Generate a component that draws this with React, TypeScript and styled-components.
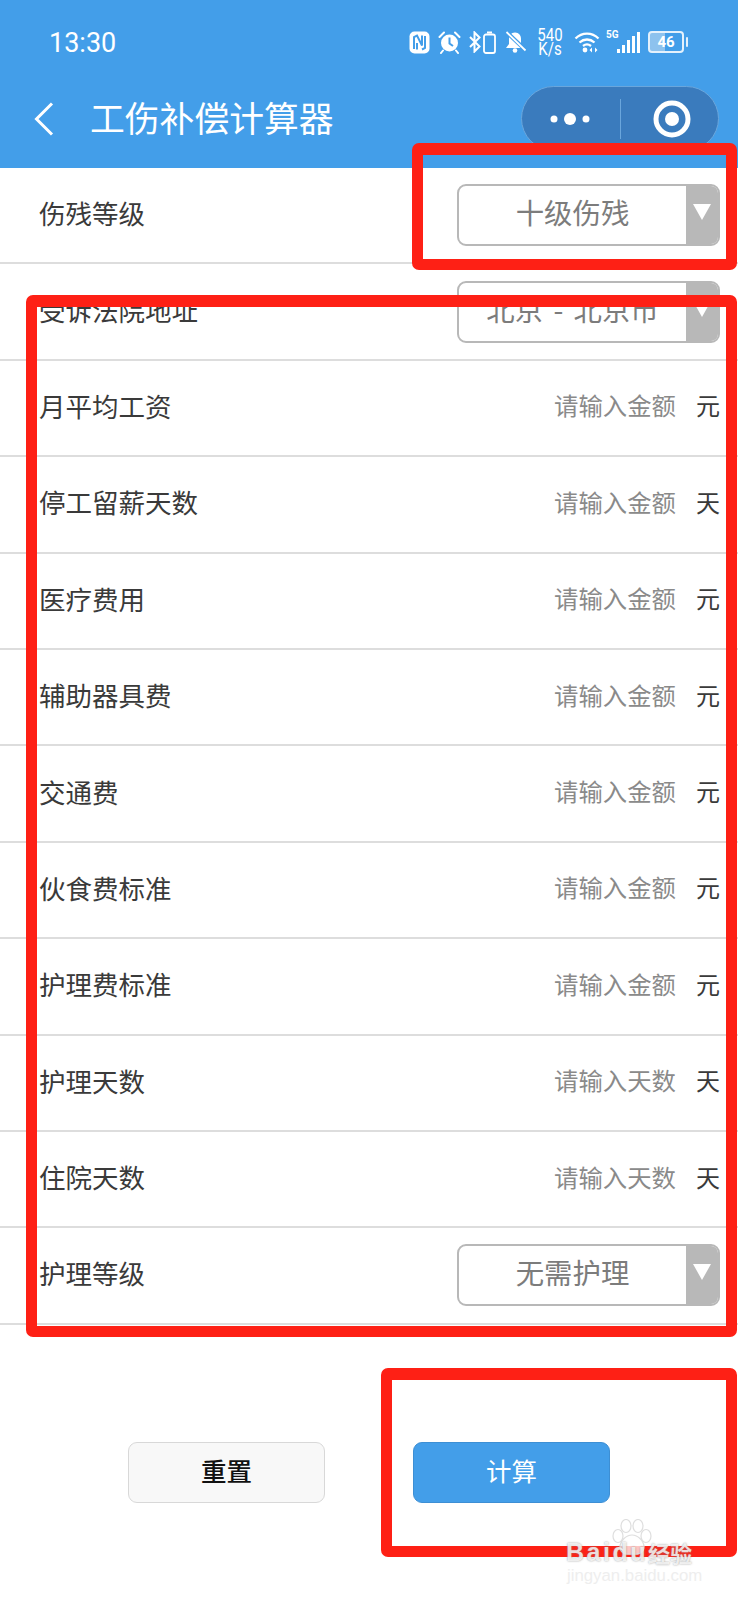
import React from "react";
import styled, { createGlobalStyle } from "styled-components";

const BLUE = "#439ee9";
const RED = "#fe2015";

const GlobalStyle = createGlobalStyle`
  html, body {
    margin: 0;
    padding: 0;
    background: #fff;
  }
  body {
    font-family: "Noto Sans CJK SC", "Noto Sans", sans-serif;
    color: #333;
  }
`;

const Page = styled.div`
  position: relative;
  width: 738px;
  height: 1600px;
  overflow: hidden;
  background: #fff;
`;

const Header = styled.header`
  height: 168px;
  box-sizing: border-box;
  background: ${BLUE};
  color: #fff;
`;

const StatusBar = styled.div`
  height: 80px;
  box-sizing: border-box;
  padding: 22px 50px 0 49px;
  display: flex;
  justify-content: space-between;
  align-items: flex-start;
`;

const Time = styled.span`
  font-family: "Roboto", "Liberation Sans", sans-serif;
  font-size: 27px;
  line-height: 42px;
`;

const StatusIcons = styled.div`
  display: flex;
  align-items: center;
  height: 40px;
`;

const StatusIcon = styled.svg<{ $gap?: number }>`
  flex: none;
  margin-left: ${(p) => p.$gap ?? 0}px;
`;

const Speed = styled.div`
  font-family: "Roboto", "Liberation Sans", sans-serif;
  font-size: 15px;
  line-height: 12px;
  text-align: center;
  width: 28px;
  margin: 0 10px 0 9px;
  transform: scaleY(1.2);
`;

const FiveG = styled.span`
  font-family: "Roboto", "Liberation Sans", sans-serif;
  font-size: 10px;
  font-weight: 700;
  width: 11px;
  margin: -16px 0 0 6px;
`;

const BatteryBox = styled.div`
  width: 36px;
  height: 22px;
  box-sizing: border-box;
  margin-left: 8px;
  border: 2px solid #e4f1fc;
  border-radius: 4px;
  background: linear-gradient(90deg, #8dc2ee 46%, transparent 46%);
  font-family: "Roboto", "Liberation Sans", sans-serif;
  font-size: 15px;
  font-weight: 700;
  line-height: 18px;
  text-align: center;
`;

const BatteryTip = styled.div`
  width: 2px;
  height: 10px;
  margin-left: 2px;
  border-radius: 1px;
  background: #e4f1fc;
`;

const NavBar = styled.div`
  height: 88px;
  box-sizing: border-box;
  padding: 6px 19px 0 34px;
  display: flex;
  align-items: flex-start;
`;

const BackIcon = styled.svg`
  width: 20px;
  height: 34px;
  margin-top: 16px;
  flex: none;
`;

const Title = styled.h1`
  margin: 0 0 0 36px;
  flex: 1;
  font-size: 34.8px;
  font-weight: 400;
  line-height: 62px;
  white-space: nowrap;
`;

const Capsule = styled.div`
  width: 198px;
  height: 65px;
  box-sizing: border-box;
  border: 1px solid #6aa6dc;
  border-radius: 33px;
  background: #3a7bbd;
  display: flex;
  align-items: center;
  justify-content: center;
`;

const CapsuleDivider = styled.div`
  width: 1px;
  height: 40px;
  background: #6aa6dc;
`;

const CapsuleSide = styled.div`
  flex: 1;
  display: flex;
  align-items: center;
  justify-content: center;
`;

const TargetIcon = styled.svg`
  width: 38px;
  height: 38px;
  margin-left: 5px;
`;

const Row = styled.div`
  height: 96.4px;
  box-sizing: border-box;
  padding: 0 18px 0 39px;
  border-bottom: 2px solid #dddddd;
  display: flex;
  align-items: center;
  justify-content: space-between;
`;

const Label = styled.span`
  font-size: 26.5px;
  color: #3a3a3a;
  margin-bottom: 5px;
`;

const InputGroup = styled.div`
  display: flex;
  align-items: center;
  margin-bottom: 6px;
`;

const Placeholder = styled.span`
  font-size: 24.4px;
  color: #8a8a8a;
`;

const Unit = styled.span`
  font-size: 24px;
  color: #3a3a3a;
  margin-left: 20px;
`;

const SelectBox = styled.div`
  width: 263px;
  height: 62px;
  box-sizing: border-box;
  border: 2px solid #b8b8b8;
  border-radius: 9px;
  display: flex;
  overflow: hidden;
`;

const SelectValue = styled.div`
  flex: 1;
  text-align: center;
  font-size: 28.4px;
  line-height: 52px;
  word-spacing: 4px;
  color: #7c7c7c;
  white-space: nowrap;
`;

const SelectArrow = styled.div`
  width: 32px;
  background: #b8b8b8;
  display: flex;
  align-items: center;
  justify-content: center;

  &::after {
    content: "";
    margin-top: -6px;
    border-left: 9px solid transparent;
    border-right: 9px solid transparent;
    border-top: 16px solid #fff;
  }
`;

const ButtonBar = styled.div`
  padding-top: 117px;
  display: flex;
  justify-content: center;
  gap: 88px;
`;

const Button = styled.button<{ $primary?: boolean }>`
  width: 197px;
  height: 61px;
  box-sizing: border-box;
  padding: 0 0 5px;
  border: 1px solid ${(p) => (p.$primary ? "#3d8fd4" : "#d8d8d8")};
  border-radius: 9px;
  background: ${(p) => (p.$primary ? BLUE : "#f8f8f8")};
  color: ${(p) => (p.$primary ? "#fff" : "#111")};
  font-family: inherit;
  font-size: 25.5px;
  font-weight: ${(p) => (p.$primary ? 400 : 500)};
`;

const AnnotationFrame = styled.div<{
  $left: number;
  $top: number;
  $height: number;
}>`
  position: absolute;
  left: ${(p) => p.$left}px;
  right: 1px;
  top: ${(p) => p.$top}px;
  height: ${(p) => p.$height}px;
  box-sizing: border-box;
  border: solid ${RED};
  border-width: 12px 11px 11px 11px;
  border-radius: 7px;
  pointer-events: none;
`;

const Watermark = styled.div`
  position: absolute;
  left: 566px;
  top: 1519px;
  width: 134px;
  height: 68px;
`;

const Paw = styled.svg`
  position: absolute;
  left: 45px;
  top: 0;
  width: 42px;
  height: 38px;
`;

const WatermarkBrand = styled.div`
  position: absolute;
  left: 0;
  top: 18px;
  display: flex;
  align-items: center;
  font-family: "Liberation Sans", sans-serif;
  font-size: 25px;
  font-weight: 700;
  line-height: 30px;
  letter-spacing: 2.5px;
  color: rgba(255, 255, 255, 0.78);
  text-shadow: 0 0 2px rgba(130, 130, 130, 0.8);
  white-space: nowrap;
`;

const WatermarkCn = styled.span`
  font-family: "Noto Sans CJK SC", sans-serif;
  font-size: 22px;
  letter-spacing: 0;
`;

const WatermarkUrl = styled.div`
  position: absolute;
  left: 1px;
  top: 47px;
  font-family: "Liberation Sans", sans-serif;
  font-size: 16.8px;
  line-height: 20px;
  color: #eeeeee;
  white-space: nowrap;
`;

type RowData = {
  label: string;
  select?: string;
  placeholder?: string;
  unit?: string;
};

const rows: RowData[] = [
  { label: "伤残等级", select: "十级伤残" },
  { label: "受诉法院地址", select: "北京 - 北京市" },
  { label: "月平均工资", placeholder: "请输入金额", unit: "元" },
  { label: "停工留薪天数", placeholder: "请输入金额", unit: "天" },
  { label: "医疗费用", placeholder: "请输入金额", unit: "元" },
  { label: "辅助器具费", placeholder: "请输入金额", unit: "元" },
  { label: "交通费", placeholder: "请输入金额", unit: "元" },
  { label: "伙食费标准", placeholder: "请输入金额", unit: "元" },
  { label: "护理费标准", placeholder: "请输入金额", unit: "元" },
  { label: "护理天数", placeholder: "请输入天数", unit: "天" },
  { label: "住院天数", placeholder: "请输入天数", unit: "天" },
  { label: "护理等级", select: "无需护理" },
];

const NfcIcon = () => (
  <StatusIcon width="21" height="23" viewBox="0 0 21 23">
    <rect x="0.5" y="0.5" width="20" height="22" rx="5" fill="#fff" />
    <path d="M5 18V6l3-1.500 5 10V4.500" fill="none" stroke={BLUE} strokeWidth="2" />
    <path d="M8 12v6.500M13 18.500l3-1.500V5" fill="none" stroke={BLUE} strokeWidth="2" />
  </StatusIcon>
);

const AlarmIcon = () => (
  <StatusIcon $gap={8} width="23" height="23" viewBox="0 0 23 23">
    <circle cx="11.500" cy="12" r="8.500" fill="#fff" />
    <path d="M11.500 6.500V12.500L15 15" fill="none" stroke={BLUE} strokeWidth="2" />
    <path
      d="M1.500 6L6 1.500M21.500 6L17 1.500M5 19.500L3 22M18 19.500L20 22"
      stroke="#fff"
      strokeWidth="2"
      strokeLinecap="round"
    />
  </StatusIcon>
);

const BluetoothIcon = () => (
  <StatusIcon $gap={8} width="12" height="22" viewBox="0 0 12 22">
    <path
      d="M1 6L10.500 15.500L5.500 20.500V1.500L10.500 6.500L1 16"
      fill="none"
      stroke="#fff"
      strokeWidth="2"
    />
  </StatusIcon>
);

const SmallBatteryIcon = () => (
  <StatusIcon $gap={2} width="13" height="23" viewBox="0 0 13 23">
    <rect x="1" y="3.500" width="11" height="18.500" rx="2" fill="none" stroke="#fff" strokeWidth="1.800" />
    <rect x="4" y="0.500" width="5" height="2" fill="#fff" />
  </StatusIcon>
);

const MutedBellIcon = () => (
  <StatusIcon $gap={8} width="23" height="24" viewBox="0 0 23 24">
    <path
      d="M11 2.500c-4 0-6 3-6 6.500v5L2 18h18l-3-4V9c0-3.500-2-6.500-6-6.500z"
      fill="#fff"
    />
    <circle cx="11" cy="20.500" r="2.300" fill="#fff" />
    <path d="M3 2.500L21.500 20" stroke={BLUE} strokeWidth="4" />
    <path d="M2.500 2L21.500 20.500" stroke="#fff" strokeWidth="1.800" />
  </StatusIcon>
);

const WifiIcon = () => (
  <StatusIcon width="26" height="22" viewBox="0 0 26 22">
    <path
      d="M1.500 7.500C8 1 18 1 24.500 7.500M5.500 11.500C10 7.500 16 7.500 20.500 11.500M9 15C11.500 13 14.500 13 17 15"
      fill="none"
      stroke="#fff"
      strokeWidth="2.300"
    />
    <circle cx="11" cy="19" r="2.400" fill="#fff" />
    <path d="M18 16.500L15.500 19L18 21.500zM21 16.500L23.500 19L21 21.500z" fill="#fff" />
  </StatusIcon>
);

const SignalIcon = () => (
  <StatusIcon width="23" height="23" viewBox="0 0 23 23">
    <rect x="0" y="18" width="3" height="4" fill="#fff" />
    <rect x="5" y="14" width="3" height="8" fill="#fff" />
    <rect x="10" y="9" width="3" height="13" fill="#fff" />
    <rect x="15" y="5" width="3" height="17" fill="#fff" />
    <rect x="20" y="1" width="3" height="21" fill="#fff" />
  </StatusIcon>
);

const App: React.FC = () => {
  return (
    <Page>
      <GlobalStyle />
      <Header>
        <StatusBar>
          <Time>13:30</Time>
          <StatusIcons>
            <NfcIcon />
            <AlarmIcon />
            <BluetoothIcon />
            <SmallBatteryIcon />
            <MutedBellIcon />
            <Speed>
              540
              <br />
              K/s
            </Speed>
            <WifiIcon />
            <FiveG>5G</FiveG>
            <SignalIcon />
            <BatteryBox>46</BatteryBox>
            <BatteryTip />
          </StatusIcons>
        </StatusBar>
        <NavBar>
          <BackIcon viewBox="0 0 20 34">
            <path d="M18 1.500L2.500 17L18 32.500" fill="none" stroke="#fff" strokeWidth="3" />
          </BackIcon>
          <Title>工伤补偿计算器</Title>
          <Capsule>
            <CapsuleSide>
              <svg width="46" height="14" viewBox="0 0 46 14">
                <circle cx="6" cy="7" r="3.500" fill="#fff" />
                <circle cx="22" cy="7" r="6" fill="#fff" />
                <circle cx="38" cy="7" r="3.500" fill="#fff" />
              </svg>
            </CapsuleSide>
            <CapsuleDivider />
            <CapsuleSide>
              <TargetIcon viewBox="0 0 38 38">
                <circle cx="19" cy="19" r="16" fill="none" stroke="#fff" strokeWidth="5" />
                <circle cx="19" cy="19" r="7" fill="#fff" />
              </TargetIcon>
            </CapsuleSide>
          </Capsule>
        </NavBar>
      </Header>

      {rows.map((row) => (
        <Row key={row.label}>
          <Label>{row.label}</Label>
          {row.select ? (
            <SelectBox>
              <SelectValue>{row.select}</SelectValue>
              <SelectArrow />
            </SelectBox>
          ) : (
            <InputGroup>
              <Placeholder>{row.placeholder}</Placeholder>
              <Unit>{row.unit}</Unit>
            </InputGroup>
          )}
        </Row>
      ))}

      <ButtonBar>
        <Button>重置</Button>
        <Button $primary>计算</Button>
      </ButtonBar>

      <AnnotationFrame $left={412} $top={143} $height={127} />
      <AnnotationFrame $left={26} $top={295} $height={1042} />
      <AnnotationFrame $left={381} $top={1368} $height={189} />

      <Watermark>
        <Paw viewBox="0 0 42 38">
          <g fill="rgba(255,255,255,0.75)" stroke="#dedede" strokeWidth="1.200">
            <ellipse cx="7" cy="17" rx="5" ry="6.500" />
            <ellipse cx="15" cy="7" rx="5" ry="6.500" />
            <ellipse cx="27" cy="7" rx="5" ry="6.500" />
            <ellipse cx="35" cy="17" rx="5" ry="6.500" />
            <path d="M21 16c-6 0-12 6-12 12 0 6 6 8 12 7 6 1 12-1 12-7 0-6-6-12-12-12z" />
          </g>
        </Paw>
        <WatermarkBrand>
          Baidu<WatermarkCn>经验</WatermarkCn>
        </WatermarkBrand>
        <WatermarkUrl>jingyan.baidu.com</WatermarkUrl>
      </Watermark>
    </Page>
  );
};

export default App;
